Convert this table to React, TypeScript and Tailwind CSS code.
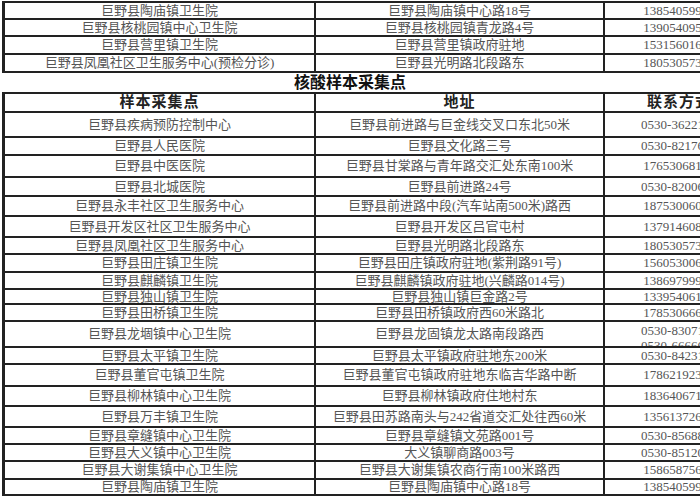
const font = { fontFamily: '"Liberation Serif", "Noto Sans CJK SC", serif' }

interface Row {
  name: string
  addr: string
  phone: string[]
  h: number
}

const topRows: Row[] = [
  { name: '巨野县陶庙镇卫生院', addr: '巨野县陶庙镇中心路18号', phone: ['13854059958'], h: 17 },
  { name: '巨野县核桃园镇中心卫生院', addr: '巨野县核桃园镇青龙路4号', phone: ['13905409551'], h: 17 },
  { name: '巨野县营里镇卫生院', addr: '巨野县营里镇政府驻地', phone: ['15315601668'], h: 18 },
  { name: '巨野县凤凰社区卫生服务中心(预检分诊)', addr: '巨野县光明路北段路东', phone: ['18053057355'], h: 18 },
]

const rows: Row[] = [
  { name: '巨野县疾病预防控制中心', addr: '巨野县前进路与巨金线交叉口东北50米', phone: ['0530-3622186'], h: 25 },
  { name: '巨野县人民医院', addr: '巨野县文化路三号', phone: ['0530-8217606'], h: 18 },
  { name: '巨野县中医医院', addr: '巨野县甘棠路与青年路交汇处东南100米', phone: ['17653068123'], h: 22 },
  { name: '巨野县北城医院', addr: '巨野县前进路24号', phone: ['0530-8200666'], h: 19 },
  { name: '巨野县永丰社区卫生服务中心', addr: '巨野县前进路中段(汽车站南500米)路西', phone: ['18753006088'], h: 20 },
  { name: '巨野县开发区社区卫生服务中心', addr: '巨野县开发区吕官屯村', phone: ['13791460866'], h: 21 },
  { name: '巨野县凤凰社区卫生服务中心', addr: '巨野县光明路北段路东', phone: ['18053057355'], h: 17 },
  { name: '巨野县田庄镇卫生院', addr: '巨野县田庄镇政府驻地(紫荆路91号)', phone: ['15605300618'], h: 18 },
  { name: '巨野县麒麟镇卫生院', addr: '巨野县麒麟镇政府驻地(兴麟路014号)', phone: ['13869799988'], h: 17 },
  { name: '巨野县独山镇卫生院', addr: '巨野县独山镇巨金路2号', phone: ['13395406166'], h: 15 },
  { name: '巨野县田桥镇卫生院', addr: '巨野县田桥镇政府西60米路北', phone: ['17853066688'], h: 17 },
  { name: '巨野县龙堌镇中心卫生院', addr: '巨野县龙固镇龙太路南段路西', phone: ['0530-8307166', '0530-6666666'], h: 26 },
  { name: '巨野县太平镇卫生院', addr: '巨野县太平镇政府驻地东200米', phone: ['0530-8423166'], h: 17 },
  { name: '巨野县董官屯镇卫生院', addr: '巨野县董官屯镇政府驻地东临吉华路中断', phone: ['17862192366'], h: 22 },
  { name: '巨野县柳林镇中心卫生院', addr: '巨野县柳林镇政府住地村东', phone: ['18364067188'], h: 20 },
  { name: '巨野县万丰镇卫生院', addr: '巨野县田苏路南头与242省道交汇处往西60米', phone: ['13561372688'], h: 21 },
  { name: '巨野县章缝镇中心卫生院', addr: '巨野县章缝镇文苑路001号', phone: ['0530-8568866'], h: 17 },
  { name: '巨野县大义镇中心卫生院', addr: '大义镇聊商路003号', phone: ['0530-8512066'], h: 17 },
  { name: '巨野县大谢集镇中心卫生院', addr: '巨野县大谢集镇农商行南100米路西', phone: ['15865875688'], h: 18 },
  { name: '巨野县陶庙镇卫生院', addr: '巨野县陶庙镇中心路18号', phone: ['13854059958'], h: 16 },
]

function TableRow({ row }: { row: Row }) {
  const cell = 'flex items-center justify-center overflow-hidden whitespace-nowrap border-r-2 border-[#222]'
  return (
    <div
      className="grid grid-cols-[311px_289px_150px] border-b-2 border-[#222] text-[13px] leading-[14px] text-[#555]"
      style={{ height: row.h }}
    >
      <div className={cell}>{row.name}</div>
      <div className={cell}>{row.addr}</div>
      {row.phone.length > 1 ? (
        <div className="flex flex-col items-center justify-start overflow-hidden whitespace-nowrap pt-[1px] border-r-2 border-[#222]">
          {row.phone.map(p => (
            <span key={p} className="leading-[15px]">{p}</span>
          ))}
        </div>
      ) : (
        <div className={cell}>{row.phone[0]}</div>
      )}
    </div>
  )
}

export default function App() {
  return (
    <div className="w-[700px] h-[500px] overflow-hidden bg-white" style={font}>
      <div className="w-[760px] pl-[2px] pt-[1px]">
        <div className="border-l-[3px] border-t-2 border-[#222]">
          {topRows.map((r, i) => (
            <TableRow key={i} row={r} />
          ))}
        </div>

        <div className="h-[19px] flex items-center pl-[292px] text-[16px] leading-none font-bold text-[#111]">
          核酸样本采集点
        </div>

        <div className="border-l-[3px] border-t-2 border-[#222]">
          <div className="grid grid-cols-[311px_289px_150px] h-[19px] border-b-2 border-[#222] text-[15px] leading-none font-bold text-[#222] tracking-[1px]">
            <div className="flex items-center justify-center border-r-2 border-[#222]">样本采集点</div>
            <div className="flex items-center justify-center border-r-2 border-[#222]">地址</div>
            <div className="flex items-center justify-center whitespace-nowrap border-r-2 border-[#222]">联系方式</div>
          </div>
          {rows.map((r, i) => (
            <TableRow key={i} row={r} />
          ))}
        </div>
      </div>
    </div>
  )
}
